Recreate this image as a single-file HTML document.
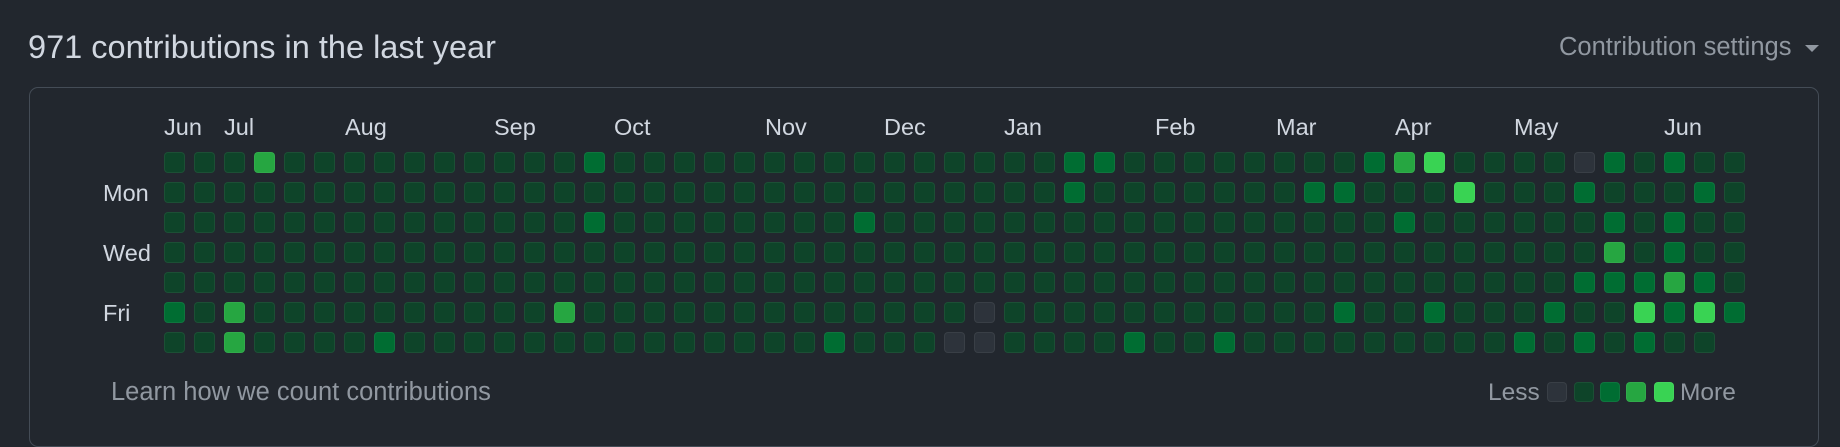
<!DOCTYPE html>
<html><head><meta charset="utf-8"><style>
html,body{margin:0;padding:0;background:#22272e;width:1840px;height:422px;overflow:hidden;font-family:"Liberation Sans",sans-serif;}
.t{position:absolute;white-space:nowrap}
#title{left:28px;top:29px;font-size:32.5px;color:#d1d7e0}
#set{left:1559px;top:33px;font-size:25.5px;color:#9198a1}
#caret{position:absolute;left:1805px;top:45px;width:0;height:0;border-left:7px solid transparent;border-right:7px solid transparent;border-top:7px solid #9198a1}
#box{position:absolute;left:29px;top:87px;width:1790px;height:360px;border:1px solid #444c56;border-radius:9px;box-sizing:border-box}
.m{font-size:23.5px;color:#d1d7e0;top:114px}
.d{font-size:23.5px;color:#d1d7e0;left:103px}
.c{position:absolute;width:21px;height:21px;border-radius:4px;box-sizing:border-box;border:1px solid rgba(255,255,255,0.06)}
.l0{background:#2d333b}.l1{background:#0e4429}.l2{background:#006d32}.l3{background:#26a641}.l4{background:#39d353}
#learn{left:111px;top:378px;font-size:25.5px;color:#9198a1}
.lg{font-size:24.5px;color:#9198a1;top:379px}
</style></head><body>
<div class="t" id="title">971 contributions in the last year</div>
<div class="t" id="set">Contribution settings</div><div id="caret"></div>
<div id="box"></div>
<div class="t m" style="left:164px">Jun</div>
<div class="t m" style="left:224px">Jul</div>
<div class="t m" style="left:345px">Aug</div>
<div class="t m" style="left:494px">Sep</div>
<div class="t m" style="left:614px">Oct</div>
<div class="t m" style="left:765px">Nov</div>
<div class="t m" style="left:884px">Dec</div>
<div class="t m" style="left:1004px">Jan</div>
<div class="t m" style="left:1155px">Feb</div>
<div class="t m" style="left:1276px">Mar</div>
<div class="t m" style="left:1395px">Apr</div>
<div class="t m" style="left:1514px">May</div>
<div class="t m" style="left:1664px">Jun</div>
<div class="t d" style="top:180px">Mon</div>
<div class="t d" style="top:240px">Wed</div>
<div class="t d" style="top:300px">Fri</div>
<div id="grid"></div>
<div class="t" id="learn">Learn how we count contributions</div>
<div class="t lg" style="left:1488px">Less</div>
<div class="c l0" style="left:1547px;top:382px;width:20px;height:20px"></div>
<div class="c l1" style="left:1574px;top:382px;width:20px;height:20px"></div>
<div class="c l2" style="left:1600px;top:382px;width:20px;height:20px"></div>
<div class="c l3" style="left:1626px;top:382px;width:20px;height:20px"></div>
<div class="c l4" style="left:1654px;top:382px;width:20px;height:20px"></div>
<div class="t lg" style="left:1680px">More</div>
<script>
var L={};
function s(r,c,v){L[r+','+c]=v;}
s(0,3,3);s(0,14,2);s(2,14,2);s(5,0,2);s(5,2,3);s(5,13,3);s(6,2,3);s(6,7,2);
s(0,30,2);s(0,31,2);s(1,30,2);s(2,23,2);s(5,27,0);s(6,22,2);s(6,26,0);s(6,27,0);s(6,32,2);s(6,35,2);
var k=[[1,1,2,3,4,1,1,1,1,0,2,1,2,1,1],
[2,2,1,1,1,4,1,1,1,2,1,1,1,2,1],
[1,1,1,2,1,1,1,1,1,1,2,1,2,1,1],
[1,1,1,1,1,1,1,1,1,1,3,1,2,1,1],
[1,1,1,1,1,1,1,1,1,2,2,2,3,2,1],
[1,2,1,1,2,1,1,1,2,1,1,4,2,4,2],
[1,1,1,1,1,1,1,2,1,2,1,2,1,1,-1]];
for(var r=0;r<7;r++)for(var j=0;j<15;j++)s(r,38+j,k[r][j]);
var h='';
for(var c=0;c<53;c++)for(var r=0;r<7;r++){var v=L[r+','+c];if(v===undefined)v=1;if(v<0)continue;
h+='<div class="c l'+v+'" style="left:'+(164+c*30)+'px;top:'+(152+r*30)+'px"></div>';}
document.getElementById('grid').innerHTML=h;
</script>
</body></html>
